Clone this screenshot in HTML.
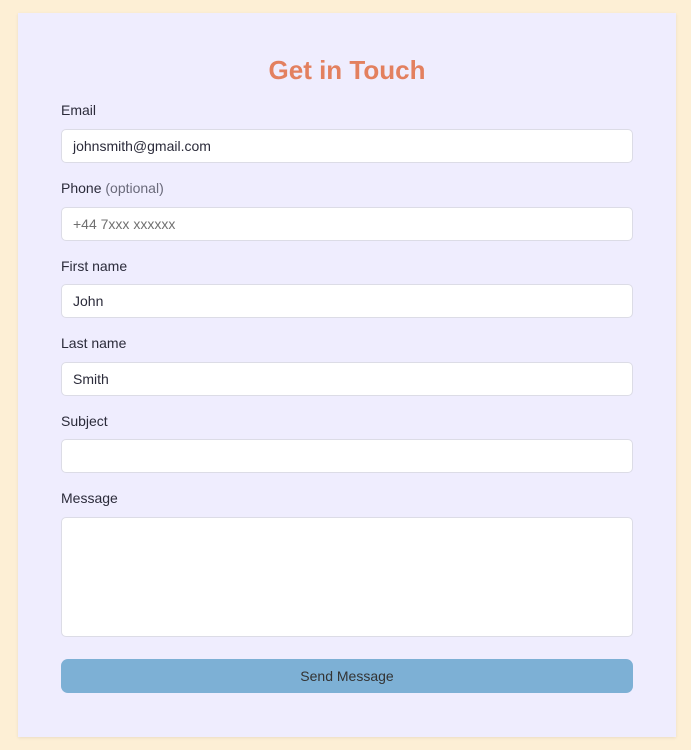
<!DOCTYPE html>
<html><head><style>
body{margin:0;background:#fdefd5;font-family:"Liberation Sans",sans-serif;width:691px;height:750px;position:relative;overflow:hidden}
.card{position:absolute;left:18px;top:13px;width:658px;height:724px;background:#efedfe;box-shadow:0 1px 3px rgba(0,0,0,.08)}
h1{position:absolute;left:0;width:100%;top:41px;margin:0;text-align:center;font-size:26px;font-weight:bold;color:#e3805f;line-height:32px}
.l{position:absolute;left:43px;font-size:14px;color:#2b2b3a;line-height:18px}
.l span{color:#6a6a7a}
.i{position:absolute;left:43px;height:32px;background:#fff;border:1px solid #dcdce6;border-radius:5px;font-size:14px;color:#2b2b3a;line-height:32px;padding-left:11px;box-sizing:content-box;width:559px}
.b{position:absolute;left:43px;top:646px;width:572px;height:34px;background:#7db0d5;border-radius:7px;text-align:center;line-height:34px;font-size:14px;color:#333}
</style></head><body><div class="card">
<h1>Get in Touch</h1>
<div class="l" style="top:88px">Email</div>
<div class="i" style="top:116px">johnsmith@gmail.com</div>
<div class="l" style="top:166px">Phone <span>(optional)</span></div>
<div class="i" style="top:194px;color:#707070">+44 7xxx xxxxxx</div>
<div class="l" style="top:244px">First name</div>
<div class="i" style="top:271px">John</div>
<div class="l" style="top:321px">Last name</div>
<div class="i" style="top:349px">Smith</div>
<div class="l" style="top:399px">Subject</div>
<div class="i" style="top:426px"></div>
<div class="l" style="top:476px">Message</div>
<div class="i" style="top:504px;height:118px"></div>
<div class="b">Send Message</div>
</div></body></html>
